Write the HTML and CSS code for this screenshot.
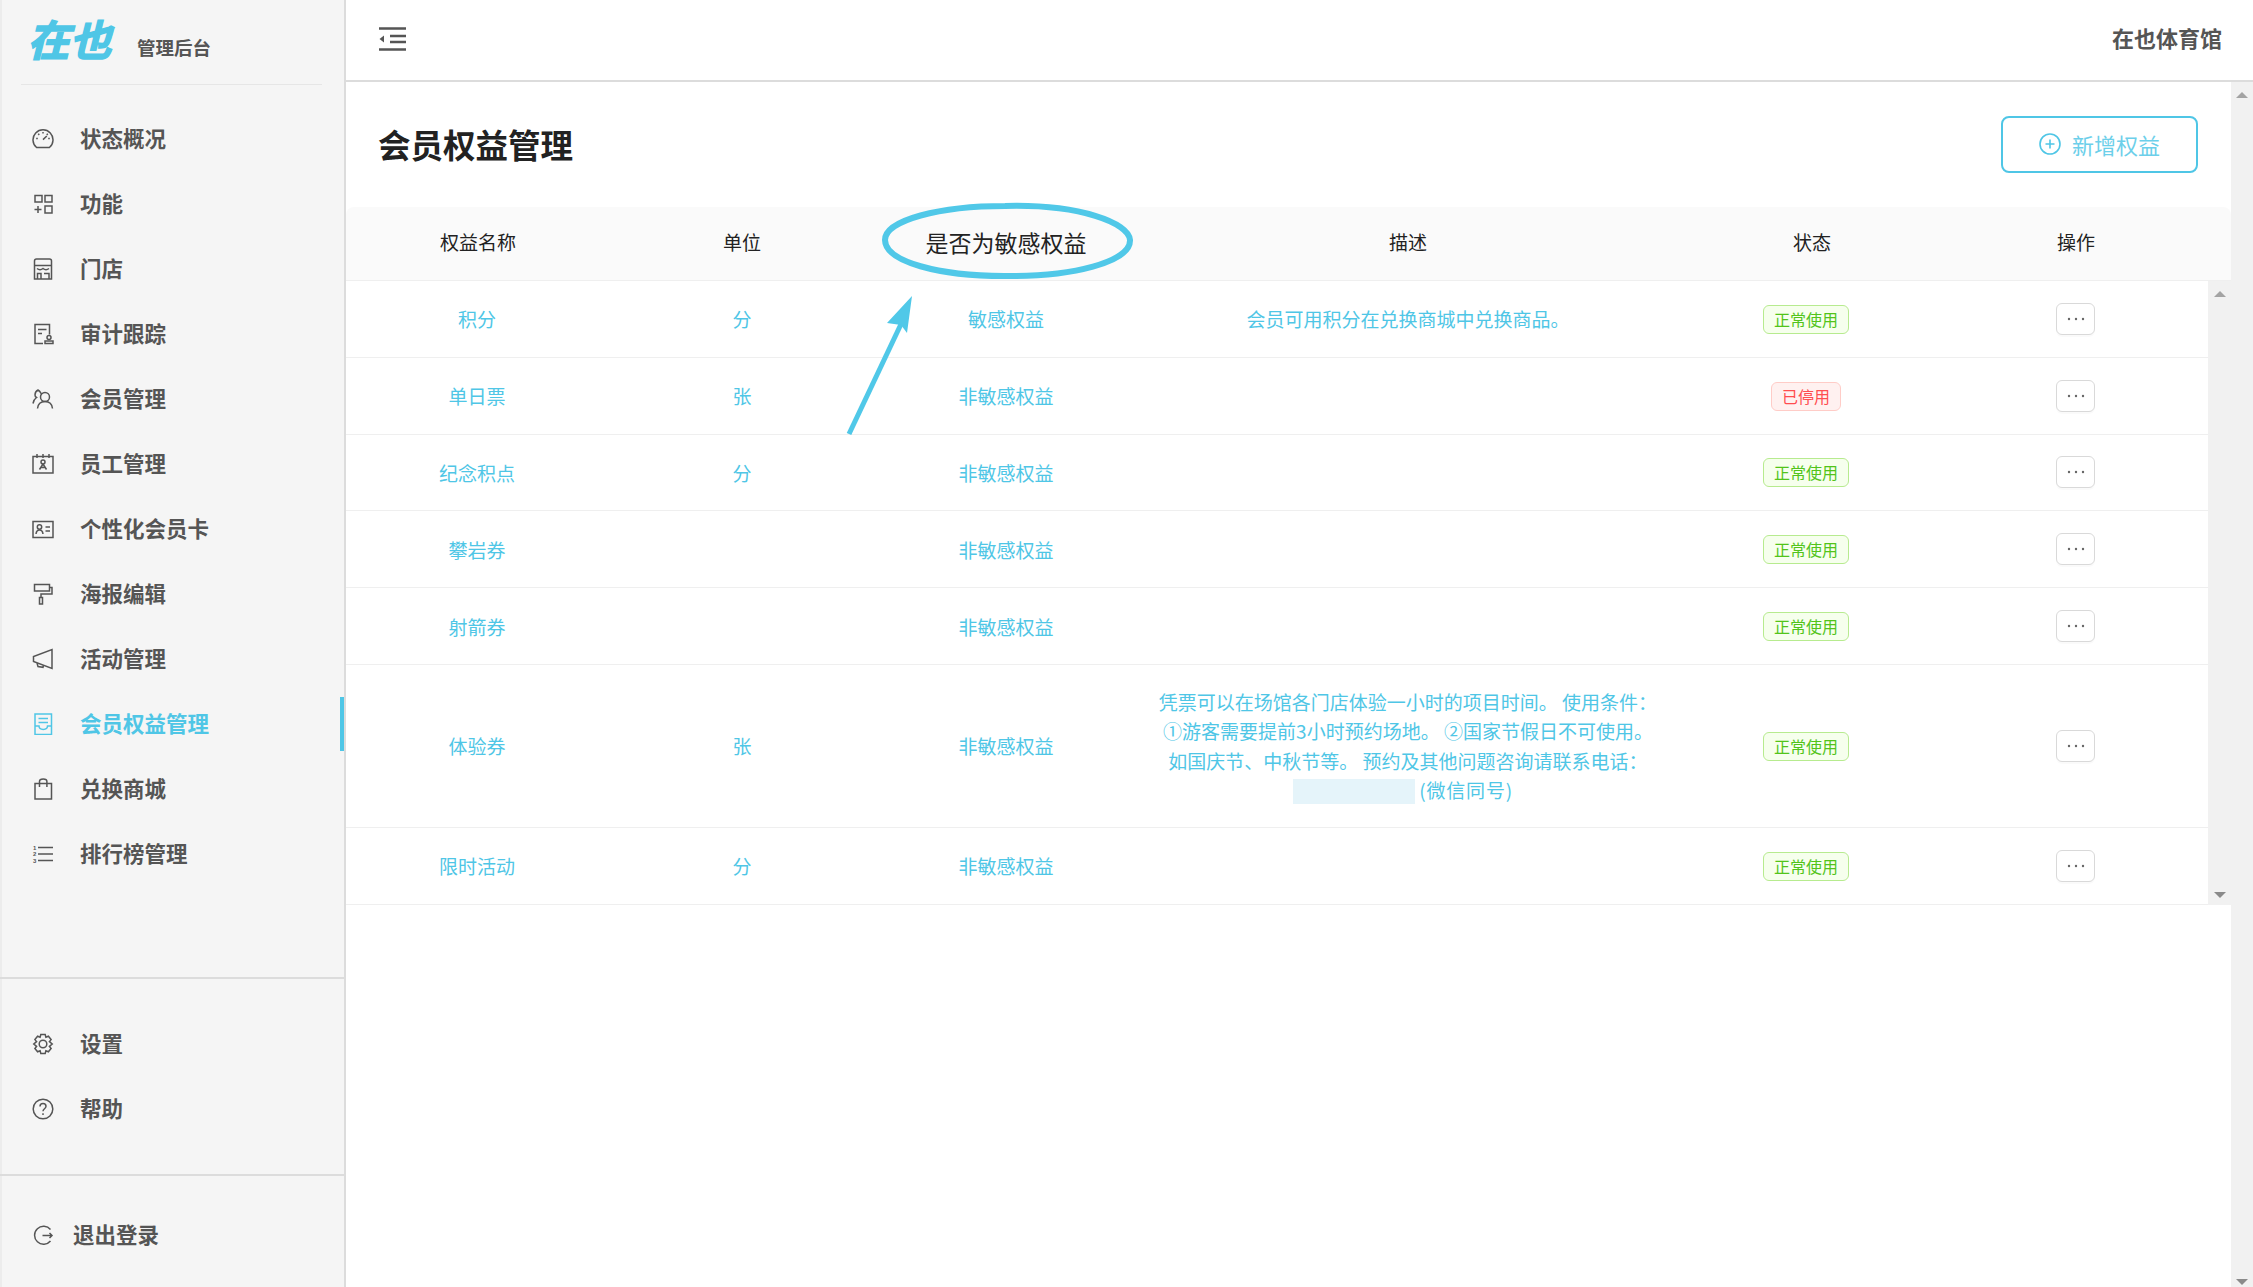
FILE: index.html
```html
<!DOCTYPE html>
<html lang="zh-CN">
<head>
<meta charset="utf-8">
<title>会员权益管理</title>
<link rel="stylesheet" href="styles.css">
</head>
<body>
<div class="app">
  <aside class="sidebar">
    <div class="brand">
      <span class="logo">在也</span>
      <span class="brand-sub">管理后台</span>
    </div>
    <nav class="nav nav-main">
      <a class="nav-item"><svg class="ico" viewBox="0 0 22 22"><path d="M4.6 19.5h12.8a10 10 0 1 0-12.8 0z"/><path d="M11 4v1.6M4.2 10.5h1.6M16.2 10.5h1.6M6.2 5.8l1.1 1.1M15.8 5.8l-1.1 1.1M14.8 8 11 11.6"/></svg><span>状态概况</span></a>
      <a class="nav-item"><svg class="ico" viewBox="0 0 22 22"><path d="M3 2.5h7v6.500H3zM13 2.500h7v6.500h-7zM13 13h7v7h-7zM6 13v7M2.500 16.500h7"/></svg><span>功能</span></a>
      <a class="nav-item"><svg class="ico" viewBox="0 0 22 22"><path d="M2.500 3q0-2 2-2h13q2 0 2 2v18h-17zM2.500 7.500h17M5 10.500q3 2.500 6 0 3 2.500 6 0M5.500 20.500v-5h3.500v5M12 15.500h5v5"/></svg><span>门店</span></a>
      <a class="nav-item"><svg class="ico" viewBox="0 0 22 22"><path d="M11 20.500H3V1.500h14.500v10M6 6.500h8.500M6 10.500h4"/><circle cx="17" cy="14.500" r="2"/><path d="M13 20.500v-2.500h8v2.500z"/></svg><span>审计跟踪</span></a>
      <a class="nav-item"><svg class="ico" viewBox="0 0 22 22"><circle cx="13" cy="9" r="4.500"/><path d="M5.500 20.500c.5-4.500 3-7 7.500-7s7 2.500 7.500 7M9.500 6c-1-1.500-1.500-3-3.500-4-2 1-3 3-3 5 0 1 .5 2 1.500 2.500-1.500 1-3 3.500-3.500 6"/></svg><span>会员管理</span></a>
      <a class="nav-item"><svg class="ico" viewBox="0 0 22 22"><path d="M1 3.500h20v16.500H1zM5 1v4M11 1v4M17 1v4"/><circle cx="11" cy="9" r="2"/><path d="M7.500 16.500 11 11l3.500 5.500M8.500 14.500h5"/></svg><span>员工管理</span></a>
      <a class="nav-item"><svg class="ico" viewBox="0 0 22 22"><path d="M1 3.500h20v16H1z"/><circle cx="7.500" cy="9" r="2.200"/><path d="M4 16c.3-2.500 1.500-4 3.500-4s3.200 1.500 3.500 4M13.500 9h4.500M13.500 13h4.500"/></svg><span>个性化会员卡</span></a>
      <a class="nav-item"><svg class="ico" viewBox="0 0 22 22"><path d="M2.500 1.500h15v6.500h-15zM17.500 4.500h2.500v6.500H9v3.500M7.500 14.500h3v6.500h-3z"/></svg><span>海报编辑</span></a>
      <a class="nav-item"><svg class="ico" viewBox="0 0 22 22"><path d="M20 1.500v19L1.500 13.500v-5zM5 15l1 3.500 5 .8.500-2"/></svg><span>活动管理</span></a>
      <a class="nav-item is-active"><svg class="ico" viewBox="0 0 22 22"><path d="M3 1h16.500v20.500H3zM6.500 5.500h9.500M6.500 9.500h9.500M3 13h4c0 4.500 8.500 4.500 8.500 0h4"/></svg><span>会员权益管理</span></a>
      <a class="nav-item"><svg class="ico" viewBox="0 0 22 22"><path d="M3 5.500h16.500v15.500H3zM7.500 9V3.500q0-2.500 3.700-2.500t3.700 2.500V9"/></svg><span>兑换商城</span></a>
      <a class="nav-item"><svg class="ico" viewBox="0 0 22 22"><path d="M6 4.500h15M6 11h15M6 17.500h15"/><text class="ico-num" x="1" y="6.500">1</text><text class="ico-num" x="1" y="13">2</text><text class="ico-num" x="1" y="20">3</text></svg><span>排行榜管理</span></a>
    </nav>
    <nav class="nav nav-settings">
      <a class="nav-item"><svg class="ico" viewBox="0 0 22 22"><path d="M8.800 1.500h4.400l.7 2.800 2.500-1.100 2.700 3.400-1.700 2.100 2.800 2.300-2.800 2.300 1.700 2.200-2.700 3.300-2.500-1-.7 2.700H8.800l-.7-2.700-2.500 1-2.700-3.300 1.700-2.200-2.800-2.300L4.600 8.700 2.900 6.600l2.700-3.400 2.500 1.100z"/><circle cx="11" cy="11" r="3.800"/></svg><span>设置</span></a>
      <a class="nav-item"><svg class="ico" viewBox="0 0 22 22"><circle cx="11" cy="11" r="9.800"/><path d="M8 8.500c0-2 1.300-3 3-3s3 1.200 3 2.800c0 2.500-3 2.400-3 5M11 15.300v1.600"/></svg><span>帮助</span></a>
    </nav>
    <div class="nav-logout">
      <a class="nav-item logout"><svg class="ico" viewBox="0 0 22 22"><path d="M18.500 5.500A9 9 0 1 0 18.500 17M10.500 11.500h9.500M17.500 9l2.500 2.500-2.500 2.500"/></svg><span>退出登录</span></a>
    </div>
  </aside>

  <main class="main">
    <header class="topbar">
      <svg class="menu-ico" viewBox="0 0 27 24"><path d="M0 1.500h27M11 9h16M11 15h16M0 22.500h27"/><path class="menu-tri" d="M5 8.500v7L0.500 12z"/></svg>
      <span class="venue">在也体育馆</span>
    </header>
    <div class="content">
      <section class="page">
        <div class="page-head">
          <h1 class="title">会员权益管理</h1>
          <button class="add-btn"><svg class="add-ico" viewBox="0 0 22 22"><circle cx="11" cy="11" r="10"/><path d="M11 6.500v9M6.500 11h9"/></svg>新增权益</button>
        </div>
        <div class="thead">
          <div>权益名称</div><div>单位</div><div class="th-mark">是否为敏感权益</div><div>描述</div><div>状态</div><div>操作</div>
        </div>
        <div class="tbody-wrap">
          <div class="tbody">
            <div class="row"><div>积分</div><div>分</div><div>敏感权益</div><div class="desc">会员可用积分在兑换商城中兑换商品。</div><div><span class="tag tag-ok">正常使用</span></div><div class="ops"><button class="more"><svg viewBox="0 0 18 4"><circle cx="2" cy="2" r="1.200"/><circle cx="9" cy="2" r="1.200"/><circle cx="16" cy="2" r="1.200"/></svg></button></div></div>
            <div class="row"><div>单日票</div><div>张</div><div>非敏感权益</div><div class="desc"></div><div><span class="tag tag-off">已停用</span></div><div class="ops"><button class="more"><svg viewBox="0 0 18 4"><circle cx="2" cy="2" r="1.200"/><circle cx="9" cy="2" r="1.200"/><circle cx="16" cy="2" r="1.200"/></svg></button></div></div>
            <div class="row"><div>纪念积点</div><div>分</div><div>非敏感权益</div><div class="desc"></div><div><span class="tag tag-ok">正常使用</span></div><div class="ops"><button class="more"><svg viewBox="0 0 18 4"><circle cx="2" cy="2" r="1.200"/><circle cx="9" cy="2" r="1.200"/><circle cx="16" cy="2" r="1.200"/></svg></button></div></div>
            <div class="row"><div>攀岩券</div><div></div><div>非敏感权益</div><div class="desc"></div><div><span class="tag tag-ok">正常使用</span></div><div class="ops"><button class="more"><svg viewBox="0 0 18 4"><circle cx="2" cy="2" r="1.200"/><circle cx="9" cy="2" r="1.200"/><circle cx="16" cy="2" r="1.200"/></svg></button></div></div>
            <div class="row"><div>射箭券</div><div></div><div>非敏感权益</div><div class="desc"></div><div><span class="tag tag-ok">正常使用</span></div><div class="ops"><button class="more"><svg viewBox="0 0 18 4"><circle cx="2" cy="2" r="1.200"/><circle cx="9" cy="2" r="1.200"/><circle cx="16" cy="2" r="1.200"/></svg></button></div></div>
            <div class="row row-tall"><div>体验券</div><div>张</div><div>非敏感权益</div><div class="desc">凭票可以在场馆各门店体验一小时的项目时间。 使用条件：<br>①游客需要提前3小时预约场地。 ②国家节假日不可使用。<br>如国庆节、中秋节等。 预约及其他问题咨询请联系电话：<br><span class="redact"></span> <span class="wx">(微信同号)</span></div><div><span class="tag tag-ok">正常使用</span></div><div class="ops"><button class="more"><svg viewBox="0 0 18 4"><circle cx="2" cy="2" r="1.200"/><circle cx="9" cy="2" r="1.200"/><circle cx="16" cy="2" r="1.200"/></svg></button></div></div>
            <div class="row"><div>限时活动</div><div>分</div><div>非敏感权益</div><div class="desc"></div><div><span class="tag tag-ok">正常使用</span></div><div class="ops"><button class="more"><svg viewBox="0 0 18 4"><circle cx="2" cy="2" r="1.200"/><circle cx="9" cy="2" r="1.200"/><circle cx="16" cy="2" r="1.200"/></svg></button></div></div>
          </div>
          <div class="scrollbar inner-scroll"><i class="arrow-up"></i><i class="arrow-down"></i></div>
        </div>
      </section>
      <div class="scrollbar outer-scroll"><i class="arrow-up"></i><i class="arrow-down"></i></div>
    </div>
  </main>
</div>
<svg class="annotation" viewBox="0 0 2253 1287">
  <path class="note-line" d="M1005 206C1080 204 1129 223 1130 240C1131 262 1072 277 1004 276C940 276 885 262 885 240C885 220 940 206 1005 206Z"/>
  <path class="note-line note-thin" d="M849 434 902 322"/>
  <path class="note-fill" d="M912 296 907 333 901 325 887 323Z"/>
</svg>
</body>
</html>
```
FILE: styles.css
```css
* { box-sizing: border-box; }
html, body { margin: 0; height: 100%; }
body {
  font-family: "Noto Sans CJK SC", "Liberation Sans", sans-serif;
  color: #222;
  background: #fff;
  overflow: hidden;
}
.app { display: flex; height: 1287px; }

/* Sidebar */
.sidebar {
  width: 346px;
  flex: none;
  display: flex;
  flex-direction: column;
  background: #f5f5f5;
  border-right: 2px solid #dcdcdc;
  box-shadow: inset 2px 0 0 #ececec;
}
.brand {
  height: 85px;
  margin: 0 22px 0 21px;
  border-bottom: 1px solid #e6e6e6;
  display: flex;
  align-items: flex-start;
}
.logo {
  margin: 12px 0 0 11px;
  width: 84px;
  font-size: 42px;
  line-height: 52px;
  font-weight: 700;
  color: #4fc6e6;
  -webkit-text-stroke: 1.6px #4fc6e6;
  transform: skewX(-14deg);
  white-space: nowrap;
}
.brand-sub {
  margin: 33px 0 0 21px;
  font-size: 18.5px;
  line-height: 28px;
  font-weight: 700;
  color: #555;
}
.nav { display: flex; flex-direction: column; }
.nav-main { margin-top: 21px; flex: 1; }
.nav-item {
  height: 65px;
  display: flex;
  align-items: center;
  padding-left: 32px;
  position: relative;
  font-size: 21.5px;
  font-weight: 700;
  color: #555;
}
.nav-item span { margin: 0 0 3px 26px; }
.ico {
  width: 22px;
  height: 22px;
  flex: none;
  fill: none;
  stroke: #555;
  stroke-width: 1.5;
}
.ico-num {
  font-family: "Liberation Sans", sans-serif;
  font-size: 6px;
  font-weight: 700;
  fill: #555;
  stroke: none;
}
.is-active { color: #4fc6e6; }
.is-active .ico { stroke: #4fc6e6; }
.is-active::after {
  content: "";
  position: absolute;
  right: 0;
  top: 6px;
  width: 4px;
  height: 54px;
  background: #4fc6e6;
}
.nav-settings {
  height: 197px;
  border-top: 2px solid #dcdcdc;
  padding-top: 32px;
}
.nav-logout {
  height: 113px;
  border-top: 2px solid #dcdcdc;
  padding-top: 26px;
}
.logout span { margin-left: 19px; }

/* Top bar */
.main { flex: 1; min-width: 0; display: flex; flex-direction: column; }
.topbar {
  height: 82px;
  flex: none;
  border-bottom: 2px solid #dcdcdc;
  display: flex;
  align-items: center;
  justify-content: space-between;
  padding: 0 31px 2px 33px;
}
.menu-ico {
  width: 27px;
  height: 24px;
  fill: none;
  stroke: #555;
  stroke-width: 2.5;
}
.menu-tri { fill: #555; stroke: none; }
.venue { font-size: 22px; font-weight: 700; color: #555; margin-bottom: 5px; }

/* Page */
.content { flex: 1; display: flex; min-height: 0; }
.page { flex: 1; min-width: 0; }
.page-head {
  height: 125px;
  display: flex;
  align-items: center;
  justify-content: space-between;
  padding: 0 33px;
}
.title {
  margin: 0 0 2px -1px;
  font-size: 32.5px;
  line-height: 44px;
  font-weight: 700;
  color: #222;
}
.add-btn {
  width: 197px;
  height: 57px;
  margin-top: -1px;
  display: flex;
  align-items: center;
  justify-content: center;
  gap: 11px;
  font: inherit;
  font-size: 22px;
  color: #6ccfea;
  background: #fff;
  border: 2px solid #4fc6e6;
  border-radius: 8px;
}
.add-ico { width: 22px; height: 22px; fill: none; stroke: #4fc6e6; stroke-width: 1.6; }

/* Table */
.thead {
  height: 74px;
  display: grid;
  grid-template-columns: 264px 264px 264px 540px 268px 260px 25px;
  align-items: center;
  text-align: center;
  font-size: 19px;
  line-height: 26px;
  padding-bottom: 3px;
  color: #222;
  background: #fafafa;
  border-bottom: 1px solid #efefef;
  border-radius: 8px 8px 0 0;
}
.th-mark { font-size: 23px; }
.tbody-wrap { display: flex; }
.tbody { flex: 1; min-width: 0; }
.row {
  height: 76.8px;
  display: grid;
  grid-template-columns: 262px 268px 260px 538px 264px 270px;
  align-items: center;
  text-align: center;
  font-size: 19px;
  color: #4fc6e6;
  border-bottom: 1px solid #efefef;
}
.row-tall { height: 163px; }
.desc { line-height: 29.5px; white-space: nowrap; padding-left: 6px; }
.redact {
  display: inline-block;
  width: 122px;
  height: 25px;
  vertical-align: -6px;
  background: #e5f4fa;
}
.wx { letter-spacing: .8px; padding-right: 10px; }
.tag {
  display: inline-block;
  height: 29px;
  padding: 0 10px;
  line-height: 27px;
  font-size: 16px;
  border: 1px solid;
  border-radius: 6px;
}
.tag-ok { color: #52c41a; background: #f6ffed; border-color: #b7eb8f; }
.tag-off { color: #ff4d4f; background: #fff1f0; border-color: #ffccc7; }
.ops { padding: 0 0 4px 5px; }
.more {
  width: 39px;
  height: 32px;
  padding: 0;
  display: inline-flex;
  align-items: center;
  justify-content: center;
  background: #fff;
  border: 1px solid #d9d9d9;
  border-radius: 6px;
  box-shadow: 0 2px 0 rgba(0, 0, 0, .02);
}
.more svg { width: 18px; height: 4px; fill: #666; }

/* Scrollbars */
.scrollbar {
  flex: none;
  position: relative;
  background: #f1f1f1;
}
.inner-scroll { width: 23px; }
.outer-scroll { width: 22px; }
.arrow-up, .arrow-down {
  position: absolute;
  left: 50%;
  margin-left: -6px;
  width: 0;
  height: 0;
  border-left: 6px solid transparent;
  border-right: 6px solid transparent;
}
.arrow-up { top: 10px; border-bottom: 6px solid #a3a3a3; }
.arrow-down { bottom: 7px; border-top: 6px solid #8a8a8a; }
.outer-scroll .arrow-down { bottom: 2px; }

/* Hand-drawn annotation over the page */
.annotation {
  position: absolute;
  left: 0;
  top: 0;
  width: 2253px;
  height: 1287px;
  pointer-events: none;
}
.note-line { fill: none; stroke: #50c8e8; stroke-width: 6; }
.note-thin { stroke-width: 5; }
.note-fill { fill: #50c8e8; }
```
